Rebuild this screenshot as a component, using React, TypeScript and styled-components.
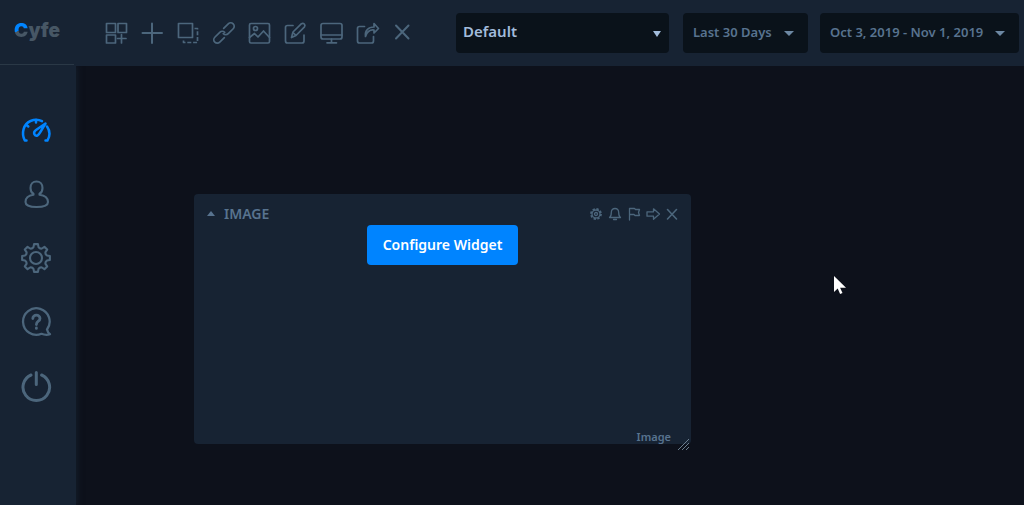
import React from 'react';
import styled, { createGlobalStyle } from 'styled-components';

const c = {
  page: '#0d111b',
  panel: '#172333',
  field: '#0a121a',
  icon: '#4c667c',
  text: '#58738f',
  bright: '#a2bcdc',
  blue: '#0084ff',
};

const GlobalStyle = createGlobalStyle`
  * { box-sizing: border-box; }
  body { margin: 0; background: ${c.page}; font-family: "Noto Sans", "Open Sans", sans-serif; }
  button, select { font: inherit; color: inherit; }
`;

const Page = styled.div`
  display: flex;
  flex-direction: column;
  min-height: 100vh;
`;

const TopBar = styled.header`
  position: relative;
  display: flex;
  align-items: center;
  height: 66px;
  background: ${c.panel};
`;

const LogoBox = styled.div`
  flex: none;
  align-self: stretch;
  display: flex;
  align-items: center;
  width: 74px;
  height: 65px;
  padding: 0 0 2px 14px;
  border-bottom: 1px solid #2a3846;
`;

const Logo = styled.a`
  color: #475765;
  font: 900 19px/24px "Inter", sans-serif;
  text-decoration: none;
`;

const LogoInitial = styled.span`
  background: linear-gradient(168deg, ${c.blue} 50%, #475765 51%);
  background-clip: text;
  -webkit-background-clip: text;
  color: transparent;
`;

const Tools = styled.nav`
  display: flex;
  flex: none;
  gap: 12px;
  margin-left: 30px;
`;

const IconButton = styled.button<{ $size: number; $active?: boolean }>`
  display: block;
  width: ${(p) => p.$size}px;
  height: ${(p) => p.$size}px;
  padding: 0;
  border: 0;
  background: none;
  color: ${(p) => (p.$active ? c.blue : c.icon)};
  cursor: pointer;
`;

const Icon = styled.svg`
  display: block;
  width: 100%;
  height: 100%;
  fill: none;
  stroke: currentColor;
  stroke-linecap: round;
  stroke-linejoin: round;
`;

const Filters = styled.div`
  display: flex;
  flex: 1;
  justify-content: flex-end;
  gap: 12px;
  padding: 0 6px 0 40px;
`;

const Field = styled.div<{ $width: number }>`
  display: grid;
  align-items: center;
  width: ${(p) => p.$width}px;
  height: 40px;
  border-radius: 4px;
  background: ${c.field};
`;

const DashboardField = styled(Field)`
  margin-right: 2px;
`;

const Select = styled.select<{ $bright?: boolean }>`
  grid-area: 1 / 1;
  width: 100%;
  height: 40px;
  padding: ${(p) => (p.$bright ? '0 28px 4px 7px' : '0 28px 3px 10px')};
  border: 0;
  appearance: none;
  background: none;
  color: ${(p) => (p.$bright ? c.bright : c.text)};
  font-size: ${(p) => (p.$bright ? 15 : 13)}px;
  font-weight: 600;
`;

const Arrow = styled.svg<{ $bright?: boolean }>`
  grid-area: 1 / 1;
  justify-self: end;
  width: ${(p) => (p.$bright ? 8 : 10)}px;
  height: ${(p) => (p.$bright ? 6 : 5)}px;
  margin-right: ${(p) => (p.$bright ? 8 : 14)}px;
  margin-top: ${(p) => (p.$bright ? 2 : 0)}px;
  fill: ${(p) => (p.$bright ? c.bright : '#6d88a3')};
  pointer-events: none;
`;

const Main = styled.div`
  display: flex;
  flex: 1;
`;

const SideBar = styled.nav`
  display: flex;
  flex: none;
  flex-direction: column;
  align-items: center;
  gap: 32px;
  width: 76px;
  padding: 48px 4px 32px 0;
  background: ${c.panel};
  box-shadow: 0 0 6px 1px #151f2c;
`;

const Canvas = styled.main`
  position: relative;
  flex: 1;
  min-height: 400px;
`;

const Widget = styled.section`
  position: absolute;
  left: 118px;
  top: 128px;
  display: flex;
  flex-direction: column;
  width: 497px;
  min-height: 250px;
  border-radius: 4px;
  background: ${c.panel};
`;

const WidgetHeader = styled.header`
  display: flex;
  align-items: center;
  height: 31px;
  padding: 8px 12px 0 12px;
  color: ${c.text};
`;

const Collapse = styled.button`
  width: 10px;
  height: 16px;
  padding: 0;
  border: 0;
  background: none;
`;

const CollapseMark = styled.svg`
  display: block;
  width: 10px;
  height: 5px;
  fill: ${c.text};
`;

const WidgetTitle = styled.h2`
  flex: 1;
  margin: 0 0 0 8px;
  font: 600 14px/20px "Noto Sans", sans-serif;
`;

const WidgetTools = styled.div`
  display: flex;
  gap: 5px;
`;

const WidgetBody = styled.div`
  display: flex;
  flex: 1;
  justify-content: center;
  align-items: flex-start;
`;

const ConfigureButton = styled.button`
  height: 40px;
  padding: 0 16px 2px;
  border: 0;
  border-radius: 4px;
  background: ${c.blue};
  color: #fff;
  font-size: 14px;
  font-weight: 600;
  cursor: pointer;
`;

const WidgetFooter = styled.footer`
  padding-right: 20px;
  color: ${c.text};
  font-size: 11px;
  font-weight: 600;
  line-height: 14px;
  text-align: right;
`;

const ResizeHandle = styled.svg`
  position: absolute;
  right: 1px;
  bottom: -7px;
  width: 14px;
  height: 14px;
  fill: none;
  stroke: #6c7f90;
  cursor: nwse-resize;
`;

const Pointer = styled.svg`
  position: absolute;
  left: 758px;
  top: 210px;
  width: 12px;
  height: 18px;
  fill: #fff;
`;

type Glyph = { label: string; art: React.ReactNode; active?: boolean };

const tools: Glyph[] = [
  {
    label: 'Add widget',
    art: (
      <>
        <path d="M2.500 2.500h9v9h-9zM14 2.500h8.500v9H14zM2.500 14h9v8h-9z" />
        <path d="M17.500 13.500v8.500M13.500 17.500h8.500" />
      </>
    ),
  },
  { label: 'New dashboard', art: <path d="M12 2.500v19.500M2.500 12h19.500" strokeWidth="2" /> },
  {
    label: 'Duplicate',
    art: (
      <>
        <path d="M2.500 2.500h14v14h-14z" />
        <path d="M18.500 7.500h3v14h-14V18" strokeDasharray="4 1.800" strokeLinecap="butt" />
      </>
    ),
  },
  {
    label: 'Link',
    art: (
      <g transform="rotate(-45 12 12)">
        <path d="M9 15.500H2.500a3.500 3.500 0 0 1 0-7h7a3.500 3.500 0 0 1 3.500 3.500" />
        <path d="M15 8.500h6.500a3.500 3.500 0 0 1 0 7h-7a3.500 3.500 0 0 1-3.500-3.500" />
      </g>
    ),
  },
  {
    label: 'Background',
    art: (
      <>
        <rect x="1.500" y="2.500" width="20" height="19.500" rx="1.500" />
        <circle cx="7.500" cy="7.500" r="2" />
        <path d="M1.500 16.500l5-4 3.500 3.500 5.500-6 6 6.500" />
      </>
    ),
  },
  {
    label: 'Edit',
    art: (
      <>
        <path d="M9 4.500H3.500q-2 0-2 2V20q0 2 2 2H18q2 0 2-2v-6" />
        <path d="M7.500 16.500l1.500-5.500 8.500-8.300q1.500-1 2.800.3 1.200 1.300.2 2.800L12 14.500zM9 11.500l3 3" />
      </>
    ),
  },
  {
    label: 'TV mode',
    art: (
      <>
        <rect x="1" y="2.500" width="21" height="15.500" rx="2" />
        <path d="M1 14h21M11.500 18v3.500M7 21.800h9.500" />
      </>
    ),
  },
  {
    label: 'Share',
    art: (
      <>
        <path d="M8.500 5.500h-5q-2 0-2 2v12.500q0 2 2 2h12q2 0 2-2v-4.500" />
        <path d="M9.500 15.500c-1-6 3-9.500 8.500-9.500V2.500l4.500 5-4.500 4.500V9c-4-.5-7 2-8.500 6.500z" />
      </>
    ),
  },
  { label: 'Delete', art: <path d="M4 4.500l12.500 13M16.500 4.500L4 17.500" strokeWidth="2" /> },
];

const teeth = Array.from({ length: 8 }, (_, i) => {
  const at = (r: number, deg: number) => {
    const a = ((i * 45 + deg - 90) * Math.PI) / 180;
    return `${(16 + r * Math.cos(a)).toFixed(2)} ${(16 + r * Math.sin(a)).toFixed(2)}`;
  };
  return `${i ? 'L' : 'M'}${at(14, -8)} L${at(14, 8)} L${at(11.2, 13)} Q${at(9.8, 22.5)} ${at(11.2, 32)}`;
}).join(' ') + 'Z';

const pages: Glyph[] = [
  {
    label: 'Dashboards',
    active: true,
    art: (
      <g strokeWidth="2.500">
        <path d="M6.500 26.500H4.800C1 19 3.500 10 10.500 7c4-1.700 8-1.600 11.500.2" />
        <path d="M27 12.500c3.200 4.500 3.100 9.500.4 14H25.500" />
        <path d="M16 6v2.500M6.500 11l1.800 1.500" />
        <path d="M25.500 9.500L16 16c-3.500 2.500-1.500 6.500 1.500 5.500 2-.7 2-2.500 8-12z" />
      </g>
    ),
  },
  {
    label: 'Account',
    art: (
      <path
        strokeWidth="2.100"
        d="M13.500 15.800c-2-1-3-3.300-3-5.800 0-3.800 2.500-6.500 6-6.500s6 2.700 6 6.500c0 2.500-1 4.800-3 5.800v1c5.500.8 8.500 3.700 8.500 7.200 0 3-4.500 5-11.500 5S5.500 27 5.500 24c0-3.500 2.700-6.400 8-7.200z"
      />
    ),
  },
  {
    label: 'Settings',
    art: (
      <g strokeWidth="2.100">
        <path d={teeth} />
        <circle cx="16" cy="16" r="6" />
      </g>
    ),
  },
  {
    label: 'Help',
    art: (
      <g strokeWidth="2.300">
        <path d="M27 23.500a13.300 13.300 0 1 0-5.500 4.300q4.500 1.800 8.500.4-2.300-1.500-3-4.700z" />
        <path d="M12.800 12.500c0-4.500 7.200-4.500 7.200 0 0 3-3.600 2.500-3.600 6M16.400 22v.4" strokeWidth="2.800" />
      </g>
    ),
  },
  {
    label: 'Log out',
    art: <path strokeWidth="3" d="M16.300 2.500v12M11 5a13.300 13.300 0 1 0 10.600 0" />,
  },
];

const widgetTools: Glyph[] = [
  {
    label: 'Widget settings',
    art: (
      <>
        <circle cx="7" cy="7" r="5" strokeDasharray="2.300 1.600" strokeWidth="1.800" strokeLinecap="butt" />
        <circle cx="7" cy="7" r="4" />
        <circle cx="7" cy="7" r="1.500" />
      </>
    ),
  },
  {
    label: 'Alerts',
    art: (
      <path d="M1.500 10.500h11c-1.300-.8-1.800-1.800-1.800-5 0-2.500-1.500-4-3.700-4S3.300 3 3.300 5.500c0 3.200-.5 4.200-1.800 5zM5.500 12.500h3" />
    ),
  },
  { label: 'Flag', art: <path d="M2.500 13V1.500h5l1 1h4L11.500 5.500l1 3H8l-1-1H2.500" /> },
  { label: 'Move', art: <path d="M1 4.800h6.500V1.800L13.500 7l-6 5.200v-3H1z" /> },
  { label: 'Remove', art: <path d="M2.500 2.500l9 9.500M11.500 2.500l-9 9.500" strokeWidth="1.600" /> },
];

export default function App() {
  return (
    <Page>
      <GlobalStyle />
      <TopBar>
        <LogoBox>
          <Logo href="#">
            <LogoInitial>C</LogoInitial>yfe
          </Logo>
        </LogoBox>
        <Tools aria-label="Dashboard tools">
          {tools.map((t) => (
            <IconButton key={t.label} $size={24} aria-label={t.label}>
              <Icon viewBox="0 0 24 24" strokeWidth="1.700">{t.art}</Icon>
            </IconButton>
          ))}
        </Tools>
        <Filters>
          <DashboardField $width={213}>
            <Select $bright aria-label="Dashboard">
              <option>Default</option>
            </Select>
            <Arrow $bright viewBox="0 0 8 6"><path d="M0 0h8L4 6z" /></Arrow>
          </DashboardField>
          <Field $width={125}>
            <Select aria-label="Period">
              <option>Last 30 Days</option>
            </Select>
            <Arrow viewBox="0 0 10 5"><path d="M0 0h10L5 5z" /></Arrow>
          </Field>
          <Field $width={199}>
            <Select aria-label="Date range">
              <option>Oct 3, 2019 - Nov 1, 2019</option>
            </Select>
            <Arrow viewBox="0 0 10 5"><path d="M0 0h10L5 5z" /></Arrow>
          </Field>
        </Filters>
      </TopBar>
      <Main>
        <SideBar aria-label="Main">
          {pages.map((p) => (
            <IconButton key={p.label} $size={32} $active={p.active} aria-label={p.label}>
              <Icon viewBox="0 0 32 32">{p.art}</Icon>
            </IconButton>
          ))}
        </SideBar>
        <Canvas>
          <Widget>
            <WidgetHeader>
              <Collapse aria-label="Collapse">
                <CollapseMark viewBox="0 0 10 5"><path d="M1 5h8L5 0z" /></CollapseMark>
              </Collapse>
              <WidgetTitle>IMAGE</WidgetTitle>
              <WidgetTools>
                {widgetTools.map((t) => (
                  <IconButton key={t.label} $size={14} aria-label={t.label}>
                    <Icon viewBox="0 0 14 14" strokeWidth="1.300">{t.art}</Icon>
                  </IconButton>
                ))}
              </WidgetTools>
            </WidgetHeader>
            <WidgetBody>
              <ConfigureButton>Configure Widget</ConfigureButton>
            </WidgetBody>
            <WidgetFooter>Image</WidgetFooter>
            <ResizeHandle viewBox="0 0 14 14"><path d="M2 13L13 2M6 13l7-7M10 13l3-3" /></ResizeHandle>
          </Widget>
          <Pointer viewBox="0 0 12 18"><path d="M0 0v16l3.700-3.500 2.400 5.500 2.400-1-2.400-5.300H12z" /></Pointer>
        </Canvas>
      </Main>
    </Page>
  );
}
